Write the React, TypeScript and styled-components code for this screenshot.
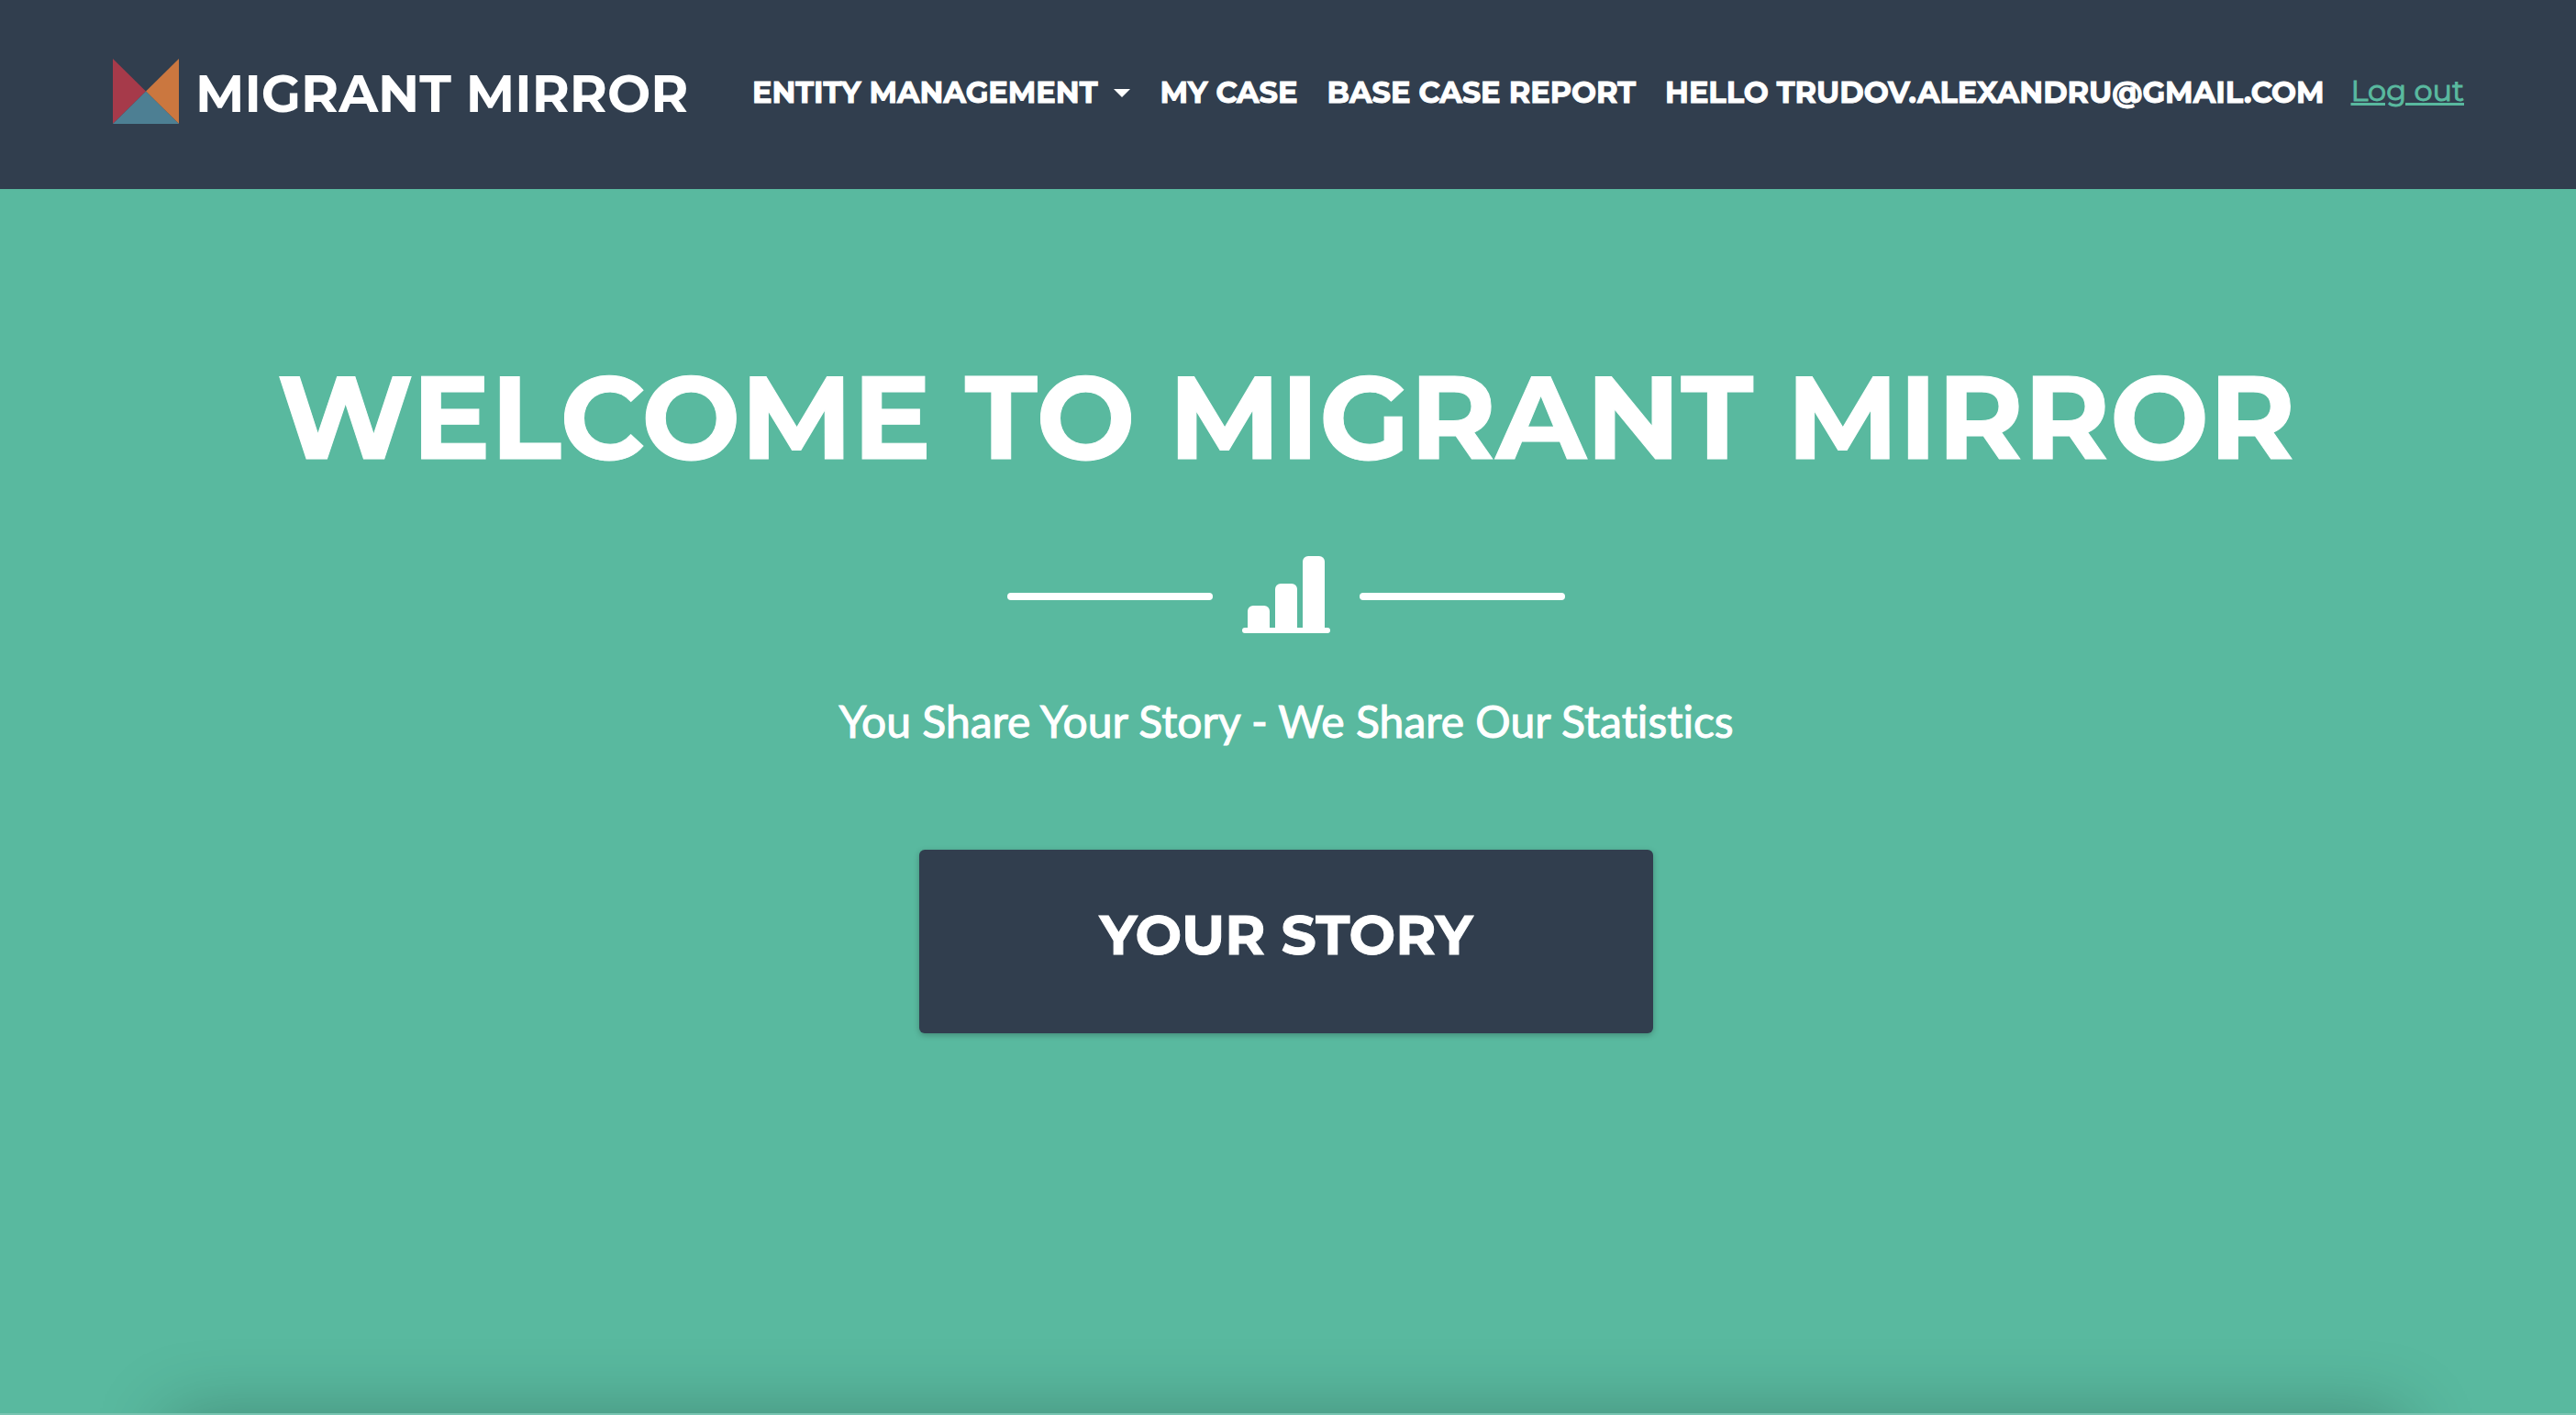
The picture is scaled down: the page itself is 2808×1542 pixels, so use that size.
import React from "react";
import styled, { createGlobalStyle } from "styled-components";

const navy = "#313e4e";
const green = "#59b99f";
const heading = `Montserrat, Inter, "Liberation Sans", sans-serif`;
const body = `Lato, "Liberation Sans", sans-serif`;

const GlobalStyle = createGlobalStyle`
  *, *::before, *::after { box-sizing: border-box; }
  body { margin: 0; background: ${green}; font-family: ${body}; color: #fff; }
`;

const Page = styled.div`
  display: flex;
  flex-direction: column;
  min-height: 100vh;
`;

const Header = styled.header`
  display: flex;
  align-items: flex-start;
  justify-content: space-between;
  padding: 64px 122px 66px 123px;
  background: ${navy};
  font-family: ${heading};
`;

const Brand = styled.a`
  display: flex;
  align-items: flex-start;
  gap: 18px;
  color: #fff;
  font-size: 56px;
  line-height: 76px;
  font-weight: 700;
  text-decoration: none;
  white-space: nowrap;
`;

const Nav = styled.nav`
  display: flex;
  align-items: center;
  height: 74px;
  font-size: 32px;
  line-height: 48px;
  white-space: nowrap;
  -webkit-text-stroke: 1px currentColor;
`;

const NavLinks = styled.div`
  display: flex;
  gap: 32px;
  margin-right: 29px;
`;

const NavLink = styled.a`
  color: #fff;
  font-weight: 700;
  text-decoration: none;
`;

const NavMenu = styled.button`
  display: flex;
  align-items: center;
  gap: 18px;
  padding: 0 0 2px;
  margin-bottom: -2px;
  border: 0;
  background: none;
  color: #fff;
  font: inherit;
  font-weight: 700;
`;

const LogOut = styled.a`
  padding-bottom: 4px;
  color: ${green};
  text-decoration: underline;
`;

const Hero = styled.main`
  position: relative;
  flex: 1;
  display: flex;
  flex-direction: column;
  align-items: center;
  overflow: hidden;
  padding: 176px 4px 0 0;
  border-bottom: 2px solid #78c5b1;
  text-align: center;

  &::after {
    content: "";
    position: absolute;
    top: 100%;
    left: 184px;
    right: 188px;
    height: 200px;
    box-shadow: 0 2px 80px rgba(0, 0, 0, 0.25);
  }
`;

const Title = styled.h1`
  margin: 0;
  font-family: ${heading};
  font-size: 128px;
  line-height: 144px;
  font-weight: 700;
  -webkit-text-stroke: 1px currentColor;
`;

const Divider = styled.div`
  display: flex;
  align-items: center;
  gap: 32px;
  margin-top: 80px;
`;

const Line = styled.span`
  width: 224px;
  height: 8px;
  border-radius: 4px;
  background: #fff;
`;

const Tagline = styled.p`
  margin: 56px 0 0;
  font-size: 48px;
  line-height: 72px;
  font-variant-ligatures: none;
  -webkit-text-stroke: 1px currentColor;
`;

const StoryButton = styled.button`
  width: 800px;
  height: 200px;
  margin-top: 104px;
  padding: 0 0 16px;
  border: 0;
  border-radius: 6px;
  background: ${navy};
  box-shadow: 0 2px 6px rgba(0, 0, 0, 0.25);
  color: #fff;
  font-family: ${heading};
  font-size: 60px;
  font-weight: 700;
  -webkit-text-stroke: 1px currentColor;
`;

function Logo() {
  return (
    <svg width="72" height="71" viewBox="0 0 72 71" aria-hidden="true">
      <path d="M0 0L36 35.5L0 71Z" fill="#a63a4a" />
      <path d="M72 0V71L36 35.5Z" fill="#cb773f" />
      <path d="M36 35.5L72 71H0Z" fill="#4d7f93" />
    </svg>
  );
}

function Caret() {
  return (
    <svg width="18" height="9" viewBox="0 0 18 9" aria-hidden="true">
      <path d="M0 0H18L9 9Z" fill="currentColor" />
    </svg>
  );
}

function ChartIcon() {
  return (
    <svg width="96" height="88" viewBox="0 0 96 88" fill="#fff" aria-hidden="true">
      <path d="M6 80V60a6 6 0 0 1 6-6H24a6 6 0 0 1 6 6V80Z" />
      <path d="M36 80V36a6 6 0 0 1 6-6H54a6 6 0 0 1 6 6V80Z" />
      <path d="M66 80V6a6 6 0 0 1 6-6H84a6 6 0 0 1 6 6V80Z" />
      <rect y="78" width="96" height="6" rx="3" />
    </svg>
  );
}

export default function App() {
  return (
    <Page>
      <GlobalStyle />
      <Header>
        <Brand href="#">
          <Logo />
          MIGRANT MIRROR
        </Brand>
        <Nav>
          <NavLinks>
            <NavMenu type="button" aria-haspopup="true">
              ENTITY MANAGEMENT
              <Caret />
            </NavMenu>
            <NavLink href="#">MY CASE</NavLink>
            <NavLink href="#">BASE CASE REPORT</NavLink>
            <NavLink href="#">HELLO TRUDOV.ALEXANDRU@GMAIL.COM</NavLink>
          </NavLinks>
          <LogOut href="#">Log out</LogOut>
        </Nav>
      </Header>
      <Hero>
        <Title>WELCOME TO MIGRANT MIRROR</Title>
        <Divider>
          <Line />
          <ChartIcon />
          <Line />
        </Divider>
        <Tagline>You Share Your Story - We Share Our Statistics</Tagline>
        <StoryButton type="button">YOUR STORY</StoryButton>
      </Hero>
    </Page>
  );
}
